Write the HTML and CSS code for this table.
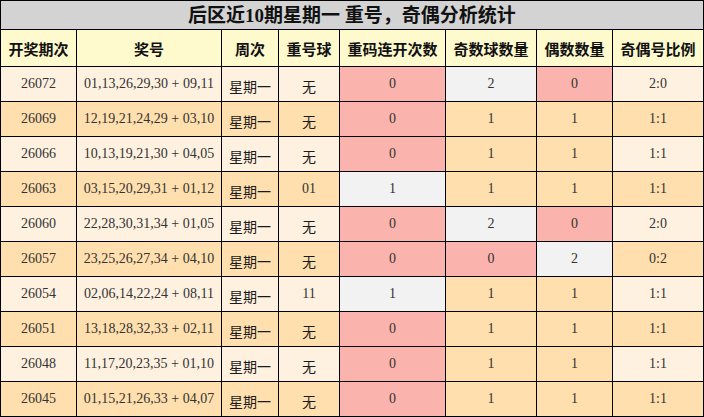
FILE: index.html
```html
<!DOCTYPE html>
<html lang="zh-CN">
<head>
<meta charset="utf-8">
<title>后区近10期星期一 重号，奇偶分析统计</title>
<link rel="stylesheet" href="styles.css">
</head>
<body>
<div class="sheet">
  <div class="title">后区近10期星期一 重号，奇偶分析统计</div>

  <div class="th">开奖期次</div><div class="th">奖号</div><div class="th">周次</div><div class="th">重号球</div><div class="th">重码连开次数</div><div class="th">奇数球数量</div><div class="th">偶数数量</div><div class="th">奇偶号比例</div>

  <div class="td a num">26072</div><div class="td a num">01,13,26,29,30 + 09,11</div><div class="td a cn">星期一</div><div class="td a cn">无</div><div class="td pink num">0</div><div class="td grey num">2</div><div class="td pink num">0</div><div class="td a num">2:0</div>

  <div class="td b num">26069</div><div class="td b num">12,19,21,24,29 + 03,10</div><div class="td b cn">星期一</div><div class="td b cn">无</div><div class="td pink num">0</div><div class="td orange num">1</div><div class="td orange num">1</div><div class="td b num">1:1</div>

  <div class="td a num">26066</div><div class="td a num">10,13,19,21,30 + 04,05</div><div class="td a cn">星期一</div><div class="td a cn">无</div><div class="td pink num">0</div><div class="td orange num">1</div><div class="td orange num">1</div><div class="td a num">1:1</div>

  <div class="td b num">26063</div><div class="td b num">03,15,20,29,31 + 01,12</div><div class="td b cn">星期一</div><div class="td b num">01</div><div class="td grey num">1</div><div class="td orange num">1</div><div class="td orange num">1</div><div class="td b num">1:1</div>

  <div class="td a num">26060</div><div class="td a num">22,28,30,31,34 + 01,05</div><div class="td a cn">星期一</div><div class="td a cn">无</div><div class="td pink num">0</div><div class="td grey num">2</div><div class="td pink num">0</div><div class="td a num">2:0</div>

  <div class="td b num">26057</div><div class="td b num">23,25,26,27,34 + 04,10</div><div class="td b cn">星期一</div><div class="td b cn">无</div><div class="td pink num">0</div><div class="td pink num">0</div><div class="td grey num">2</div><div class="td b num">0:2</div>

  <div class="td a num">26054</div><div class="td a num">02,06,14,22,24 + 08,11</div><div class="td a cn">星期一</div><div class="td a num">11</div><div class="td grey num">1</div><div class="td orange num">1</div><div class="td orange num">1</div><div class="td a num">1:1</div>

  <div class="td b num">26051</div><div class="td b num">13,18,28,32,33 + 02,11</div><div class="td b cn">星期一</div><div class="td b cn">无</div><div class="td pink num">0</div><div class="td orange num">1</div><div class="td orange num">1</div><div class="td b num">1:1</div>

  <div class="td a num">26048</div><div class="td a num">11,17,20,23,35 + 01,10</div><div class="td a cn">星期一</div><div class="td a cn">无</div><div class="td pink num">0</div><div class="td orange num">1</div><div class="td orange num">1</div><div class="td a num">1:1</div>

  <div class="td b num">26045</div><div class="td b num">01,15,21,26,33 + 04,07</div><div class="td b cn">星期一</div><div class="td b cn">无</div><div class="td pink num">0</div><div class="td orange num">1</div><div class="td orange num">1</div><div class="td b num">1:1</div>
</div>
</body>
</html>
```

FILE: styles.css
```css
html, body {
  margin: 0;
  padding: 0;
  background: #ffffff;
}

.sheet {
  width: 704px;
  box-sizing: border-box;
  display: grid;
  grid-template-columns: 75px 144px 56px 60px 105px 90px 75px 90px;
  grid-template-rows: 28px 36px repeat(10, 34px);
  gap: 1px;
  padding: 1px;
  background: #000000;
}

.title {
  grid-column: 1 / -1;
  background: #d3d3d3;
  color: #111111;
  font-family: "Liberation Serif", "Noto Sans CJK SC", serif;
  font-weight: bold;
  font-size: 19px;
  display: flex;
  align-items: center;
  justify-content: center;
  line-height: 1;
}

.th {
  background: #fffacd;
  color: #111111;
  font-family: "Noto Sans CJK SC", sans-serif;
  font-weight: bold;
  font-size: 15px;
  display: flex;
  align-items: center;
  justify-content: center;
  white-space: nowrap;
}

.td {
  display: flex;
  align-items: center;
  justify-content: center;
  white-space: nowrap;
}

.num {
  font-family: "Liberation Serif", "Noto Sans CJK SC", serif;
  font-size: 14px;
  color: #333333;
}

.cn {
  font-family: "Noto Sans CJK SC", sans-serif;
  font-size: 14px;
  color: #1a1a1a;
  padding-top: 4px;
}

.a { background: #fff1e0; }
.b { background: #ffdfad; }
.pink { background: #fab3ad; }
.grey { background: #f2f2f2; }
.orange { background: #ffdfad; }
```
